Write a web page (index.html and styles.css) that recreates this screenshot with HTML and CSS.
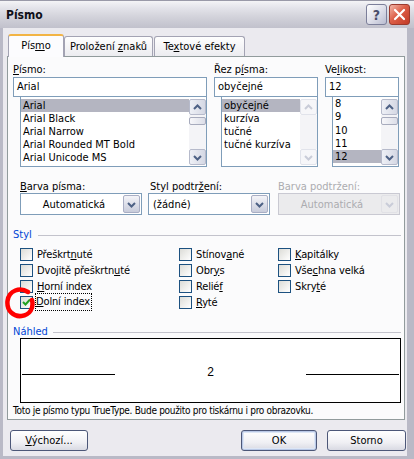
FILE: index.html
```html
<!DOCTYPE html>
<html lang="cs">
<head>
<meta charset="utf-8">
<title>Písmo</title>
<link rel="stylesheet" href="styles.css">
</head>
<body>
<div class="win">
  <div class="titlebar">
    <span class="title">Písmo</span>
    <div class="tbtns">
      <span class="tbtn help">?</span>
      <span class="tbtn close"><svg width="13" height="13" viewBox="0 0 13 13"><path d="M2 2 L11 11 M11 2 L2 11" stroke="#fff" stroke-width="2.2" stroke-linecap="round"/></svg></span>
    </div>
  </div>
  <div class="body">
    <div class="tabs">
      <div class="tab active"><span>Pís<u>m</u>o</span></div>
      <div class="tab"><span>Proložení <u>z</u>naků</span></div>
      <div class="tab"><span>Te<u>x</u>tové efekty</span></div>
    </div>
    <div class="panel">
      <div class="fontrow">
        <div class="fcol c1">
          <div class="lbl"><u>P</u>ísmo:</div>
          <div class="input">Arial</div>
          <div class="list">
            <div class="items">
              <div class="item sel">Arial</div>
              <div class="item">Arial Black</div>
              <div class="item">Arial Narrow</div>
              <div class="item">Arial Rounded MT Bold</div>
              <div class="item">Arial Unicode MS</div>
            </div>
            <div class="sbar">
              <span class="sbtn"><svg width="15" height="15" viewBox="0 0 15 15"><path d="M4 9 L7.5 5.5 L11 9" fill="none" stroke="#4d6185" stroke-width="2"/></svg></span>
              <div class="track"><span class="thumb"></span></div>
              <span class="sbtn"><svg width="15" height="15" viewBox="0 0 15 15"><path d="M4 6 L7.5 9.5 L11 6" fill="none" stroke="#4d6185" stroke-width="2"/></svg></span>
            </div>
          </div>
        </div>
        <div class="fcol c2">
          <div class="lbl">Řez p<u>í</u>sma:</div>
          <div class="input">obyčejné</div>
          <div class="list">
            <div class="items">
              <div class="item sel">obyčejné</div>
              <div class="item">kurzíva</div>
              <div class="item">tučné</div>
              <div class="item">tučné kurzíva</div>
            </div>
            <div class="sbar dis">
              <span class="sbtn"><svg width="15" height="15" viewBox="0 0 15 15"><path d="M4 9 L7.5 5.5 L11 9" fill="none" stroke="#c9ccd8" stroke-width="2"/></svg></span>
              <div class="track"></div>
              <span class="sbtn"><svg width="15" height="15" viewBox="0 0 15 15"><path d="M4 6 L7.5 9.5 L11 6" fill="none" stroke="#c9ccd8" stroke-width="2"/></svg></span>
            </div>
          </div>
        </div>
        <div class="fcol c3">
          <div class="lbl">Ve<u>l</u>ikost:</div>
          <div class="input">12</div>
          <div class="list">
            <div class="items">
              <div class="item">8</div>
              <div class="item">9</div>
              <div class="item">10</div>
              <div class="item">11</div>
              <div class="item sel">12</div>
            </div>
            <div class="sbar">
              <span class="sbtn"><svg width="15" height="15" viewBox="0 0 15 15"><path d="M4 9 L7.5 5.5 L11 9" fill="none" stroke="#4d6185" stroke-width="2"/></svg></span>
              <div class="track"><span class="thumb"></span></div>
              <span class="sbtn"><svg width="15" height="15" viewBox="0 0 15 15"><path d="M4 6 L7.5 9.5 L11 6" fill="none" stroke="#4d6185" stroke-width="2"/></svg></span>
            </div>
          </div>
        </div>
      </div>

      <div class="comborow">
        <div class="ccol k1">
          <div class="lbl"><u>B</u>arva písma:</div>
          <div class="combo center"><span class="cval">Automatická</span><span class="dd"><svg width="15" height="15" viewBox="0 0 15 15"><path d="M4 6 L7.5 9.5 L11 6" fill="none" stroke="#4d6185" stroke-width="2"/></svg></span></div>
        </div>
        <div class="ccol k2">
          <div class="lbl">Styl podtr<u>ž</u>ení:</div>
          <div class="combo"><span class="cval">(žádné)</span><span class="dd"><svg width="15" height="15" viewBox="0 0 15 15"><path d="M4 6 L7.5 9.5 L11 6" fill="none" stroke="#4d6185" stroke-width="2"/></svg></span></div>
        </div>
        <div class="ccol k3">
          <div class="lbl dis">Barva podtržení:</div>
          <div class="combo center disabled"><span class="cval">Automatická</span><span class="dd"><svg width="15" height="15" viewBox="0 0 15 15"><path d="M4 6 L7.5 9.5 L11 6" fill="none" stroke="#c9ccd8" stroke-width="2"/></svg></span></div>
        </div>
      </div>

      <div class="ghead styl"><span>Styl</span></div>
      <div class="checks">
        <div class="chk"><span class="box"></span><span class="txt">Přeškrt<u>n</u>uté</span></div>
        <div class="chk"><span class="box"></span><span class="txt">Stínov<u>a</u>né</span></div>
        <div class="chk"><span class="box"></span><span class="txt"><u>K</u>apitálky</span></div>
        <div class="chk"><span class="box"></span><span class="txt">Dvojitě přeškrtn<u>u</u>té</span></div>
        <div class="chk"><span class="box"></span><span class="txt">Obr<u>y</u>s</span></div>
        <div class="chk"><span class="box"></span><span class="txt">Vše<u>c</u>hna velká</span></div>
        <div class="chk"><span class="box"></span><span class="txt"><u>H</u>orní index</span></div>
        <div class="chk"><span class="box"></span><span class="txt">Relié<u>f</u></span></div>
        <div class="chk"><span class="box"></span><span class="txt">Skry<u>t</u>é</span></div>
        <div class="chk"><span class="box checked"><svg width="11" height="11" viewBox="0 0 11 11"><path d="M2 5 L4.5 7.5 L9 2.5" fill="none" stroke="#21a121" stroke-width="2"/></svg></span><span class="txt focus"><u>D</u>olní index</span></div>
        <div class="chk"><span class="box"></span><span class="txt"><u>R</u>yté</span></div>
      </div>

      <div class="ghead nahled"><span>Náhled</span></div>
      <div class="preview">
        <span class="pline"></span>
        <span class="pnum">2</span>
        <span class="pline"></span>
      </div>
      <div class="note">Toto je písmo typu TrueType. Bude použito pro tiskárnu i pro obrazovku.</div>
    </div>
    <div class="buttons">
      <span class="btn"><span><u>V</u>ýchozí...</span></span>
      <div class="rbtns">
        <span class="btn def">OK</span>
        <span class="btn">Storno</span>
      </div>
    </div>
  </div>
  <svg class="mark" width="34" height="34" viewBox="0 0 34 34"><path d="M25 6 C17 1 6 4 4.5 15 C3.5 25 11 31 18.5 30 C27 29 31 22 29 14" fill="none" stroke="#f00" stroke-width="4.5" stroke-linecap="round"/></svg>
</div>
</body>
</html>
```
FILE: styles.css
```css
* { box-sizing: border-box; }
body { margin: 0; background: #fff; }
u { text-decoration: underline; text-underline-offset: 1px; }

.win {
  position: relative;
  width: 414px;
  height: 459px;
  display: flex;
  flex-direction: column;
  padding: 0 7px 3px 3px;
  background: #b9b9c6;
  font-family: "DejaVu Sans Condensed", "DejaVu Sans", sans-serif;
  font-stretch: condensed;
  font-size: 11px;
  color: #000;
  overflow: hidden;
}

.titlebar {
  height: 28px;
  margin: 0 -7px 0 -3px;
  display: flex;
  align-items: center;
  justify-content: space-between;
  padding: 0 4px 0 6px;
  background: linear-gradient(#f4f4f6 0%, #e4e4ea 25%, #d2d2da 60%, #c1c1cc 100%);
  border-top: 1px solid #9a9aa8;
}
.title { font-weight: bold; font-size: 12px; color: #101018; }
.tbtns { display: flex; gap: 2px; }
.tbtn {
  width: 21px; height: 21px;
  border-radius: 3px;
  display: flex; align-items: center; justify-content: center;
}
.help {
  background: linear-gradient(135deg, #ffffff 0%, #dfe0ea 50%, #b9bcd0 100%);
  border: 1px solid #7c7f9a;
  color: #4a4e6a;
  font-weight: bold;
  font-size: 14px;
  font-family: "DejaVu Sans", sans-serif;
}
.close {
  background: linear-gradient(135deg, #f2b8aa 0%, #dd5f48 45%, #c23a26 100%);
  border: 1px solid #9a3a2e;
}

.body {
  flex: 1;
  background: #ebeaef;
  display: flex;
  flex-direction: column;
  padding: 6px 1px 0 4px;
}

.tabs { display: flex; align-items: flex-end; height: 22px; padding-left: 1px; position: relative; z-index: 1; }
.tab {
  height: 20px;
  padding: 0 4px;
  display: flex; align-items: center; justify-content: center;
  white-space: nowrap;
  border: 1px solid #a3a3b3;
  border-bottom: none;
  border-radius: 3px 3px 0 0;
  background: linear-gradient(#fefefe, #ececf0);
  margin-right: 1px;
}
.tab:nth-child(2) { width: 89px; margin-left: -1px; }
.tab:nth-child(3) { width: 91px; }
.tab.active {
  width: 56px;
  height: 23px;
  margin-bottom: -1px;
  background: #fcfcfe;
  border-top: 2px solid #f2b445;
  padding-bottom: 2px;
}

.panel {
  height: 364px;
  width: 398px;
  border: 1px solid #919b9c;
  background: #fbfbfc;
  padding: 6px 0 0 5px;
}

.lbl { height: 14px; line-height: 14px; white-space: nowrap; }
.lbl.dis { color: #acacb0; }

.fontrow { display: flex; gap: 7px; }
.c1 { width: 194px; }
.c2 { width: 104px; }
.c3 { width: 74px; }
.input {
  height: 20px;
  border: 1px solid #7f9db9;
  background: #fff;
  padding-left: 3px;
  line-height: 18px;
}
.list {
  margin-left: 7px;
  height: 70px;
  border: 1px solid #7f9db9;
  border-top: 0;
  background: #fff;
  display: flex;
}
.items { flex: 1; padding-top: 2px; overflow: hidden; }
.item { height: 13px; line-height: 13px; padding-left: 2px; white-space: nowrap; }
.item.sel { background: #b4b5c1; }
.c3 .items { padding-top: 0; }
.c3 .item { height: 13.3px; line-height: 13px; }

.sbar {
  width: 17px;
  display: flex; flex-direction: column;
  padding: 2px 0 1px;
}
.sbtn {
  height: 16px;
  border: 1px solid #b6bacb;
  border-radius: 2px;
  background: linear-gradient(90deg, #eef0f6, #d5d8e4);
  display: flex; align-items: center; justify-content: center;
}
.sbar.dis .sbtn { border-color: #e1e3eb; background: #f6f6f9; }
.track { flex: 1; background: #f4f4f7; padding-top: 2px; }
.thumb {
  display: block; height: 8px;
  border: 1px solid #a7abbd;
  border-radius: 2px;
  background: linear-gradient(90deg, #f7f7fa, #dcdee8);
}

.comborow { display: flex; margin: 13px 0 0 7px; }
.k1 { width: 122px; }
.k2 { width: 122px; margin-left: 6px; }
.k2 .lbl { padding-left: 2px; }
.k3 { width: 122px; margin-left: 8px; }
.ccol .lbl { height: 13px; line-height: 13px; }
.combo {
  height: 22px;
  border: 1px solid #7f9db9;
  background: #fff;
  display: flex; align-items: center;
  padding: 1px;
}
.cval { flex: 1; padding-left: 3px; }
.combo.center .cval { text-align: center; }
.combo.disabled { background: #ebebed; border-color: #c9c9d2; color: #acacb0; }
.dd {
  width: 17px; height: 18px;
  border: 1px solid #a9aec4;
  border-radius: 2px;
  background: linear-gradient(#f4f4f8, #c8ccdb);
  display: flex; align-items: center; justify-content: center;
}
.combo.disabled .dd { background: #ebebed; border-color: #e1e1e6; }

.ghead {
  display: flex; align-items: center;
  color: #0046d5;
  height: 14px; line-height: 14px;
}
.ghead::after { content: ""; flex: 1; height: 1px; background: #c3c3cc; margin: 1px 3px 0 5px; }
.styl { margin-top: 13px; }
.styl::after { margin-left: 6px; }

.checks {
  display: grid;
  grid-template-columns: 159px 99px 1fr;
  grid-auto-rows: 16px;
  margin: 4px 0 0 7px;
}
.chk { display: flex; align-items: center; white-space: nowrap; }
.txt { letter-spacing: -0.15px; }
.box {
  width: 13px; height: 13px;
  border: 1px solid #1c5180;
  background: linear-gradient(135deg, #dcdcd7, #ffffff);
  margin-right: 4px;
  display: flex; align-items: center; justify-content: center;
}
.focus { outline: 1px dotted #000; outline-offset: 0; padding: 1px 1px 2px 0; margin-left: -1px; }
.checks .chk:nth-child(10) { grid-column: 1; }
.checks .chk:nth-child(11) { grid-column: 2; grid-row: 4; }

.nahled { margin-top: 16px; height: 12px; line-height: 12px; }
.preview {
  margin-left: 7px;
  width: 381px;
  height: 65px;
  border: 1px solid #000;
  background: #fff;
  display: flex; align-items: center;
  padding: 0 1px;
}
.pline { width: 93px; height: 1px; background: #000; margin-top: 8px; }
.pnum { flex: 1; text-align: center; font-family: "Liberation Sans", sans-serif; font-size: 12px; margin-top: 3px; }
.note { margin-top: 1px; height: 14px; line-height: 14px; white-space: nowrap; font-size: 10px; letter-spacing: -0.3px; }

.buttons { display: flex; justify-content: space-between; margin-top: 10px; padding-left: 3px; }
.rbtns { display: flex; gap: 10px; }
.btn {
  height: 21px;
  width: 78px;
  border: 1px solid #4c5778;
  border-radius: 3px;
  background: linear-gradient(#ffffff, #f0f0f4 60%, #d9dae3);
  display: flex; align-items: center; justify-content: center;
}
.rbtns .btn:first-child { width: 76px; box-shadow: inset 0 0 0 1px #b9c8e6, inset 0 0 0 2px #dde6f5; }
.rbtns .btn:last-child { width: 79px; }

.mark { position: absolute; left: 3px; top: 286px; }
```
